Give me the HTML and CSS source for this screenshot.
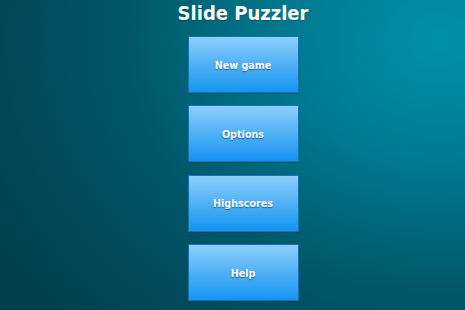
FILE: index.html
```html
<!DOCTYPE html>
<html>
<head>
<meta charset="utf-8">
<link rel="stylesheet" href="styles.css">
</head>
<body>
<div class="screen">
  <h1 class="title">Slide Puzzler</h1>
  <div class="menu">
    <div class="btn">New game</div>
    <div class="btn">Options</div>
    <div class="btn">Highscores</div>
    <div class="btn">Help</div>
  </div>
</div>
</body>
</html>
```
FILE: styles.css
```css
html, body {
  margin: 0;
  padding: 0;
  width: 465px;
  height: 310px;
  overflow: hidden;
}
.screen {
  box-sizing: border-box;
  width: 465px;
  height: 310px;
  padding-left: 21px;
  background: radial-gradient(ellipse 520px 420px at 440px 40px, #0091aa 0%, #00798f 30%, #005769 60%, #003f4d 100%);
  font-family: "DejaVu Sans Condensed", "DejaVu Sans", Verdana, sans-serif;
  font-stretch: condensed;
  display: flex;
  flex-direction: column;
  align-items: center;
}
.title {
  margin: 0;
  padding-top: 1px;
  height: 35px;
  font-size: 20px;
  font-weight: bold;
  color: #ffffff;
  line-height: 24px;
  text-shadow: 0 1px 1px rgba(0,0,0,0.25);
}
.menu {
  display: flex;
  flex-direction: column;
  gap: 12.4px;
}
.btn {
  width: 109px;
  height: 55px;
  border: 1px solid #1872b0;
  background: linear-gradient(to bottom, #8ccffb 0%, #4fb1f5 50%, #1594f2 100%);
  color: #fff;
  font-size: 10.7px;
  font-weight: bold;
  display: flex;
  align-items: center;
  justify-content: center;
  padding-top: 1px;
  box-sizing: content-box;
  height: 54px;
  text-shadow: 0 1px 1px rgba(0,40,80,0.6);
  box-shadow: 0 1px 1px rgba(0,0,0,0.15);
}
```
